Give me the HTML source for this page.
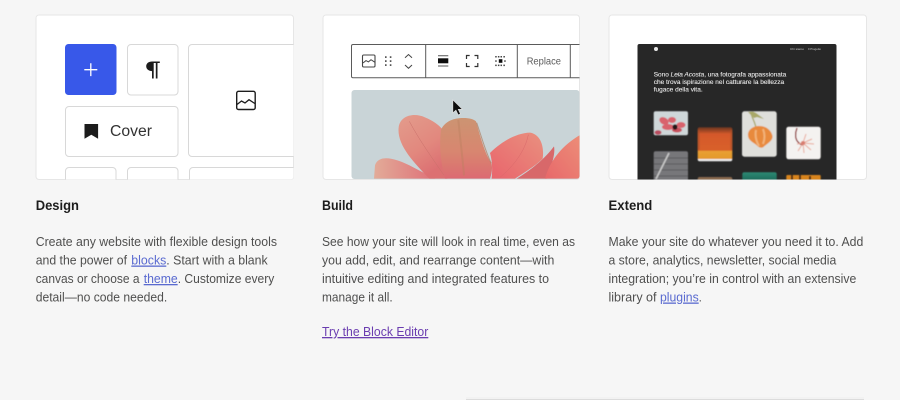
<!DOCTYPE html>
<html lang="en">
<head>
<meta charset="utf-8">
<title>Design, Build, Extend</title>
<style>
html,body{margin:0;padding:0;width:900px;height:400px;overflow:hidden;background:#f6f6f6}
svg{display:block;position:absolute;left:0;top:0}
text{font-family:"Liberation Sans",Arial,sans-serif}
.h{font-size:14px;font-weight:700;fill:#1e1e1e}
.b{font-size:13px;fill:#50504f}
.l{font-size:13px;fill:#5a6bd0;text-decoration:underline}
.v{font-size:13px;fill:#6a3cb0;text-decoration:underline}
</style>
</head>
<body>
<svg width="900" height="400" viewBox="0 0 900 400" xmlns="http://www.w3.org/2000/svg">
<defs>
<clipPath id="c1"><rect x="36" y="15" width="257.500" height="164.500" rx="3"/></clipPath>
<clipPath id="c2"><rect x="323" y="15" width="256.500" height="164.500" rx="3"/></clipPath>
<clipPath id="c3"><rect x="609" y="15" width="257.500" height="164.500" rx="3"/></clipPath>
<clipPath id="ph"><rect x="351.500" y="90" width="228" height="89" rx="3"/></clipPath>
<filter id="s0" x="-2%" y="-10%" width="104%" height="120%"><feGaussianBlur stdDeviation=".22"/></filter>
<filter id="s1" x="-5%" y="-5%" width="110%" height="110%"><feGaussianBlur stdDeviation=".3"/></filter>
<filter id="s2" x="-5%" y="-5%" width="110%" height="110%"><feGaussianBlur stdDeviation=".6"/></filter>
<filter id="s3" x="-5%" y="-5%" width="110%" height="110%"><feGaussianBlur stdDeviation="1.800"/></filter>
<linearGradient id="pA" x1="0" y1="0" x2=".5" y2="1"><stop offset="0" stop-color="#e39c8c"/><stop offset=".6" stop-color="#e2887e"/><stop offset="1" stop-color="#dc6f72"/></linearGradient>
<linearGradient id="pB" x1="0" y1="0" x2="0" y2="1"><stop offset="0" stop-color="#cc9472"/><stop offset=".55" stop-color="#d8866f"/><stop offset="1" stop-color="#dc6a72"/></linearGradient>
<linearGradient id="pC" x1="0" y1="1" x2="1" y2="0"><stop offset="0" stop-color="#e9646c"/><stop offset="1" stop-color="#e9907e"/></linearGradient>
<linearGradient id="pD" x1="0" y1="1" x2="1" y2="0"><stop offset="0" stop-color="#e8686a"/><stop offset="1" stop-color="#ec8e78"/></linearGradient>
<linearGradient id="pE" x1="0" y1="0" x2="1" y2="0"><stop offset="0" stop-color="#e2ab98"/><stop offset="1" stop-color="#df7078"/></linearGradient>
<linearGradient id="t2" x1="0" y1="0" x2="0" y2="1"><stop offset="0" stop-color="#6a3520"/><stop offset=".2" stop-color="#d5592a"/><stop offset=".68" stop-color="#d9602c"/><stop offset=".7" stop-color="#e9a030"/><stop offset=".93" stop-color="#e3982f"/><stop offset=".94" stop-color="#eee"/></linearGradient>
<linearGradient id="t7" x1="0" y1="0" x2="0" y2="1"><stop offset="0" stop-color="#2e8a74"/><stop offset="1" stop-color="#145c50"/></linearGradient>
</defs>

<!-- Cards -->
<g fill="#fff" stroke="#e6e6e6">
<rect x="36" y="15" width="257.500" height="164.500" rx="3"/>
<rect x="323" y="15" width="256.500" height="164.500" rx="3"/>
<rect x="609" y="15" width="257.500" height="164.500" rx="3"/>
</g>

<!-- Design card -->
<g clip-path="url(#c1)"><g filter="url(#s1)">
<rect x="65" y="44" width="51.500" height="51" rx="3.500" fill="#3858e9"/>
<path d="M90.800 63.300v12.800M84.300 69.700h13" stroke="#fff" stroke-width="1.300" fill="none"/>
<g fill="#fff" stroke="#d8d8d8" stroke-width="1">
<rect x="127.500" y="44.500" width="50.500" height="50.500" rx="3.500"/>
<rect x="188.500" y="44.500" width="130" height="112" rx="3.500"/>
<rect x="65.500" y="106.500" width="112.500" height="50" rx="3.500"/>
<rect x="65.500" y="167.500" width="50.500" height="40" rx="3.500"/>
<rect x="127.500" y="167.500" width="50.500" height="40" rx="3.500"/>
<rect x="189.500" y="167.500" width="130" height="40" rx="3.500"/>
</g>
<path d="M152 61.500c-3.300 0-5.800 1.900-5.800 4.800s2.500 4.800 5.800 4.800v7.400h1.700V63h2.100v15.500h1.700V63h2.300v-1.500z" fill="#1e1e1e"/>
<rect x="236.700" y="91.300" width="18.500" height="18.200" rx="1.800" fill="none" stroke="#1e1e1e" stroke-width="1.400"/>
<path d="M237 104.500l4.500-3.500 3.500 2 4-3.300 5.800 3.800" fill="none" stroke="#1e1e1e" stroke-width="1.300"/>
<path d="M84.500 124h13.600v14.800l-6.800-4-6.800 4z" fill="#1e1e1e"/>
<text x="110" y="136" font-size="15.500" fill="#333" textLength="42" lengthAdjust="spacingAndGlyphs">Cover</text>
</g></g>

<!-- Build card -->
<g clip-path="url(#c2)">
<g filter="url(#s1)">
<path d="M590 44.500H353a1.500 1.500 0 0 0-1.500 1.500v30.200a1.500 1.500 0 0 0 1.500 1.500H590" fill="#fff" stroke="#5a5a5a"/>
<path d="M425.700 44.500v33M517.300 44.500v33M570.300 44.500v33" stroke="#5a5a5a" fill="none"/>
<rect x="362.500" y="55" width="12.500" height="12" rx="1.200" fill="none" stroke="#444" stroke-width="1.100"/>
<path d="M363 63l3-2.400 2.400 1.300 2.600-2.200 3.800 2.500" fill="none" stroke="#444" stroke-width="1"/>
<g fill="#444"><rect x="385" y="56.300" width="1.600" height="1.600"/><rect x="389.800" y="56.300" width="1.600" height="1.600"/><rect x="385" y="60.300" width="1.600" height="1.600"/><rect x="389.800" y="60.300" width="1.600" height="1.600"/><rect x="385" y="64.300" width="1.600" height="1.600"/><rect x="389.800" y="64.300" width="1.600" height="1.600"/></g>
<path d="M405 57.800l3.500-3.300 3.500 3.300M405 65l3.500 3.300L412 65" fill="none" stroke="#444" stroke-width="1"/>
<path d="M438 55.800h10.300M438 66h10.300" stroke="#555" stroke-width="1"/>
<rect x="438" y="58.300" width="10.300" height="5" fill="#111"/>
<path d="M466.500 59v-3.500h3.200M474.500 55.500h3.300V59M477.800 63v3.500h-3.300M469.700 66.500h-3.200V63" fill="none" stroke="#333" stroke-width="1.200"/>
<g fill="#444">
<rect x="495.200" y="56" width="1.500" height="1.500"/><rect x="497.900" y="56" width="1.500" height="1.500"/><rect x="500.500" y="56" width="1.500" height="1.500"/><rect x="503.400" y="56" width="1.500" height="1.500"/>
<rect x="495.200" y="60.300" width="1.500" height="1.500"/><rect x="504.200" y="60.300" width="1.500" height="1.500"/>
<rect x="495.200" y="64.600" width="1.500" height="1.500"/><rect x="497.900" y="64.600" width="1.500" height="1.500"/><rect x="500.500" y="64.600" width="1.500" height="1.500"/><rect x="503.400" y="64.600" width="1.500" height="1.500"/>
<rect x="498.800" y="59.200" width="3.600" height="3.600" fill="#111"/>
</g>
<text x="526.700" y="64.300" font-size="10" fill="#5c5c5c" textLength="34.300" lengthAdjust="spacingAndGlyphs">Replace</text>
</g>
<g clip-path="url(#ph)">
<rect x="351.500" y="90" width="228" height="89" fill="#c9d4d7"/>
<g transform="translate(350 88) scale(.33333)" filter="url(#s2)">
<path d="M75 232C85 200 130 206 190 238L255 272H72Z" fill="url(#pE)"/>
<path d="M146 118C150 84 190 72 225 88C250 98 268 112 278 125L275 200L292 272H238C190 222 140 170 146 118Z" fill="url(#pA)"/>
<path d="M178 100C210 160 250 215 282 262" stroke="#c9706a" stroke-width="1.500" fill="none"/>
<path d="M420 195C455 160 500 135 540 134C568 138 584 170 578 212C555 235 520 255 495 272H425C428 240 426 215 420 195Z" fill="url(#pC)"/>
<path d="M535 140C525 190 490 235 450 268" stroke="#d9686a" stroke-width="1.500" fill="none"/>
<path d="M500 272C540 248 585 212 612 175C616 195 608 225 590 272Z" fill="#d8686a"/>
<path d="M585 272C600 215 640 170 692 140V272Z" fill="url(#pD)"/>
<path d="M273 125C285 100 310 90 340 90C358 90 372 94 378 100C392 150 404 195 425 228C428 245 424 260 420 272H285C270 220 268 170 273 125Z" fill="url(#pB)"/>
<path d="M325 96C330 150 338 210 342 262" stroke="#b9805f" stroke-width="6" fill="none" opacity=".4"/>
<path d="M380 104C396 150 406 190 424 226" stroke="#a86f4e" stroke-width="3" fill="none" opacity=".6"/>
</g>
</g>
<path d="M452.800 99.800v13.200l3.100-2.800 2.300 4.800 2.300-1-2.200-4.700h4.100z" fill="#111" stroke="#ddd" stroke-width=".7" filter="url(#s1)"/>
</g>

<!-- Extend card -->
<g clip-path="url(#c3)">
<path d="M637.500 179.500V46a2 2 0 0 1 2-2h195a2 2 0 0 1 2 2v133.500z" fill="#272727"/>
<g filter="url(#s1)">
<circle cx="656" cy="49" r="2" fill="#e8e8e8"/>
<text x="790" y="50" font-size="3" fill="#ccc" textLength="14" lengthAdjust="spacingAndGlyphs">Chi siamo</text>
<text x="808" y="50" font-size="3" fill="#ccc" textLength="13" lengthAdjust="spacingAndGlyphs">Il Progetto</text>
<g font-size="6.800" fill="#e6e6e6" stroke="#e6e6e6" stroke-width=".12">
<text x="653.700" y="76.300" textLength="132.600" lengthAdjust="spacingAndGlyphs">Sono <tspan font-style="italic">Leia Acosta</tspan>, una fotografa appassionata</text>
<text x="653.700" y="83.900" textLength="130.500" lengthAdjust="spacingAndGlyphs">che trova ispirazione nel catturare la bellezza</text>
<text x="653.700" y="91.400" textLength="49" lengthAdjust="spacingAndGlyphs">fugace della vita.</text>
</g>
</g>
<!-- thumb 1 -->
<g filter="url(#s2)">
<rect x="653.700" y="111.300" width="34.300" height="24" rx="2" fill="#cfd7d9"/>
<g fill="#d9626c">
<ellipse cx="664" cy="121" rx="5" ry="3.500" transform="rotate(30 664 121)"/>
<ellipse cx="672" cy="120" rx="4" ry="3"/>
<ellipse cx="681" cy="125" rx="4.500" ry="3"/>
<ellipse cx="668" cy="127" rx="6" ry="3"/>
<ellipse cx="677" cy="130" rx="5" ry="2.500" fill="#c8505c"/>
<ellipse cx="658" cy="132.500" rx="3.500" ry="2.300" fill="#b94b5f"/>
</g>
<ellipse cx="675" cy="127" rx="2.500" ry="2.800" fill="#241416"/>
<!-- thumb 2 -->
<rect x="697.700" y="127.300" width="34.600" height="34" rx="2" fill="url(#t2)"/>
<rect x="697.700" y="130" width="2" height="20" fill="#a8502a" opacity=".6"/>
<rect x="730.300" y="130" width="2" height="20" fill="#a8502a" opacity=".6"/>
<!-- thumb 3 -->
<rect x="742" y="111.300" width="34.700" height="45.400" rx="2.500" fill="#dfdfdb"/>
<path d="M748 112l6 6 3-1 7 2-8-6-3-1.500z" fill="#a9a868"/>
<path d="M751 113c1 5 4 9 5 15" stroke="#a9a868" stroke-width="1.300" fill="none"/>
<path d="M748 135c0-6 6-9 11-9 7 0 12 4 13.500 10 .5 5-6 8-9 11-2 1.500-5 .5-7-2-4-3-8.500-5-8.500-10z" fill="#e88a3c"/>
<path d="M756 130c-1 5 0 11 3 16M763 129c2 5 2 10 0 15" stroke="#f2b37a" stroke-width="2" fill="none"/>
<!-- thumb 4 -->
<rect x="786.300" y="126.700" width="34.400" height="32.600" rx="2.500" fill="#f4f2f0"/>
<path d="M797 128c-2 5-2 11 1 14 2 2 3 3 5 3" stroke="#8e2a2c" stroke-width="1.300" fill="none"/>
<path d="M803 143l9-4M803 143l11 1M803 143l8 7M803 143l1 10M803 143l-5 8M803 143l3-9M803 143l-6 1" stroke="#e9a898" stroke-width="1" fill="none"/>
<circle cx="803" cy="143" r="2" fill="#d97d70"/>
<!-- thumb 5 -->
<rect x="653.700" y="151.300" width="34.300" height="32" rx="2" fill="#77777a"/>
<path d="M654 158h34M654 164h34M654 170h34M654 176h34" stroke="#5c5c5c" stroke-width="1"/>
<path d="M656 179l13-26" stroke="#c8c8c8" stroke-width="1.600"/>
<!-- thumb 6,7,8 -->
<rect x="697.700" y="177" width="34.600" height="8" rx="2" fill="#8a6a50"/>
<rect x="742.300" y="172.300" width="34.400" height="12" rx="2" fill="url(#t7)"/>
<rect x="786.300" y="175" width="34.400" height="8" rx="1" fill="#d8841f"/>
<path d="M792 175v5M800 175v5M810 176v4" stroke="#4a2a12" stroke-width="2"/>
</g>
</g>

<g filter="url(#s0)">
<!-- Headings -->
<text class="h" x="35.700" y="210" textLength="43.300" lengthAdjust="spacingAndGlyphs">Design</text>
<text class="h" x="322" y="210" textLength="31" lengthAdjust="spacingAndGlyphs">Build</text>
<text class="h" x="608.500" y="210" textLength="43.800" lengthAdjust="spacingAndGlyphs">Extend</text>

<!-- Design text -->
<text class="b" x="35.700" y="246" textLength="241.300" lengthAdjust="spacingAndGlyphs">Create any website with flexible design tools</text>
<text class="b" x="35.700" y="264.500" textLength="91.300" lengthAdjust="spacingAndGlyphs">and the power of</text>
<text class="l" x="131.300" y="264.500" textLength="35" lengthAdjust="spacingAndGlyphs">blocks</text>
<text class="b" x="166.300" y="264.500" textLength="101.400" lengthAdjust="spacingAndGlyphs">. Start with a blank</text>
<text class="b" x="35.700" y="283" textLength="103.800" lengthAdjust="spacingAndGlyphs">canvas or choose a</text>
<text class="l" x="143.700" y="283" textLength="34" lengthAdjust="spacingAndGlyphs">theme</text>
<text class="b" x="177.700" y="283" textLength="96.600" lengthAdjust="spacingAndGlyphs">. Customize every</text>
<text class="b" x="35.700" y="301.500" textLength="131.600" lengthAdjust="spacingAndGlyphs">detail—no code needed.</text>

<!-- Build text -->
<text class="b" x="322" y="246" textLength="253" lengthAdjust="spacingAndGlyphs">See how your site will look in real time, even as</text>
<text class="b" x="322" y="264.500" textLength="232.300" lengthAdjust="spacingAndGlyphs">you add, edit, and rearrange content—with</text>
<text class="b" x="322" y="283" textLength="227" lengthAdjust="spacingAndGlyphs">intuitive editing and integrated features to</text>
<text class="b" x="322" y="301.500" textLength="70.700" lengthAdjust="spacingAndGlyphs">manage it all.</text>
<text class="v" x="322" y="336" textLength="106.300" lengthAdjust="spacingAndGlyphs">Try the Block Editor</text>

<!-- Extend text -->
<text class="b" x="608.500" y="246" textLength="254.800" lengthAdjust="spacingAndGlyphs">Make your site do whatever you need it to. Add</text>
<text class="b" x="608.500" y="264.500" textLength="227.800" lengthAdjust="spacingAndGlyphs">a store, analytics, newsletter, social media</text>
<text class="b" x="608.500" y="283" textLength="247.800" lengthAdjust="spacingAndGlyphs">integration; you’re in control with an extensive</text>
<text class="b" x="608.500" y="301.500" textLength="48" lengthAdjust="spacingAndGlyphs">library of</text>
<text class="l" x="660" y="301.500" textLength="38.700" lengthAdjust="spacingAndGlyphs">plugins</text>
<text class="b" x="698.700" y="301.500" textLength="3" lengthAdjust="spacingAndGlyphs">.</text>
</g>

<!-- Bottom edge -->
<rect x="466" y="397" width="398" height="2" fill="#f2f2f2"/>
<rect x="466" y="399" width="398" height="1" fill="#dcdcdc"/>
</svg>
</body>
</html>
